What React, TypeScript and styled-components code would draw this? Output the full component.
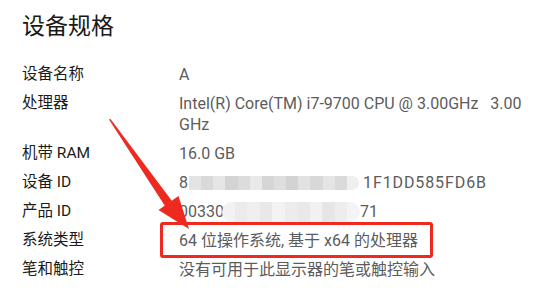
import styled, { createGlobalStyle } from 'styled-components';

const GlobalStyle = createGlobalStyle`
    html, body {
        margin: 0;
        padding: 0;
        background: #ffffff;
    }
    body {
        font-family: Roboto, 'Noto Sans CJK SC', sans-serif;
    }
`;

const specs: Spec[] = [
    { label: '设备名称', value: ['A'] },
    {
        label: '处理器',
        value: ['Intel(R) Core(TM) i7-9700 CPU @ 3.00GHz   3.00', 'GHz'],
    },
    { label: '机带 RAM', value: ['16.0 GB'] },
    {
        label: '设备 ID',
        value: ['8'],
        mosaic: { tones: ['#e4e4e4', '#d9d9d9', '#e6e6e6', '#d4d4d4', '#dcdcdc', '#e9e9e9', '#d6d6d6', '#dedede', '#d3d3d3', '#e2e2e2', '#d8d8d8', '#e5e5e5', '#dadada', '#efefef'], tall: false },
        tail: '1F1DD585FD6B',
    },
    {
        label: '产品 ID',
        value: ['00330'],
        mosaic: { tones: ['#f2f2f2', '#ebebeb', '#efefef', '#e8e8e8', '#f3f3f3', '#ececec', '#e9e9e9', '#f1f1f1', '#e6e6e6', '#ededed', '#f4f4f4'], tall: true },
        tail: '71',
    },
    { label: '系统类型', value: ['64 位操作系统, 基于 x64 的处理器'] },
    { label: '笔和触控', value: ['没有可用于此显示器的笔或触控输入'] },
];

export default function App() {
    return (
        <>
            <GlobalStyle />
            <Page>
                <Title>设备规格</Title>
                <SpecList>
                    {specs.map((spec) => (
                        <SpecRow key={spec.label}>
                            <Label>{spec.label}</Label>
                            <Value>
                                {spec.value.map((line, i) => (
                                    <Line key={i}>
                                        {line}
                                        {spec.mosaic && (
                                            <Mosaic $tall={spec.mosaic.tall}>
                                                {spec.mosaic.tones.map((tone, j) => (
                                                    <Tile key={j} style={{ background: tone }} />
                                                ))}
                                            </Mosaic>
                                        )}
                                        {spec.tail && (
                                            <Tail $wide={!spec.mosaic?.tall}>{spec.tail}</Tail>
                                        )}
                                    </Line>
                                ))}
                            </Value>
                        </SpecRow>
                    ))}
                </SpecList>
                <Highlight />
                <Arrow width="543" height="295" viewBox="0 0 543 295">
                    <polygon
                        points="109,119.5 110.5,119 172,201 165,206"
                        fill="#ee2a20"
                    />
                    <polygon
                        points="189,229 178.5,196 158.5,210"
                        fill="#ee2a20"
                    />
                </Arrow>
            </Page>
        </>
    );
}

const Page = styled.div`
    position: relative;
    width: 543px;
    height: 295px;
    overflow: hidden;
    padding: 8px 0 0 22px;
    box-sizing: border-box;
`;

const Title = styled.h1`
    margin: 0;
    font-family: 'Noto Sans CJK SC', sans-serif;
    font-size: 23px;
    font-weight: 400;
    line-height: 32px;
    color: #1a1a1a;
`;

const SpecList = styled.div`
    display: flex;
    flex-direction: column;
    gap: 8px;
    margin-top: 24px;
`;

const SpecRow = styled.div`
    display: grid;
    grid-template-columns: 157px 1fr;
    line-height: 21px;
`;

const Label = styled.div`
    color: #1b1b1b;
    font-family: Roboto, 'Noto Sans CJK SC', sans-serif;
    font-size: 15.5px;
`;

const Value = styled.div`
    color: #5c5c5c;
    font-family: Roboto, 'Noto Sans CJK SC', sans-serif;
    font-size: 16px;
`;

const Line = styled.div`
    display: flex;
    align-items: center;
    height: 21px;
    white-space: pre;
`;

const Mosaic = styled.span<{ $tall: boolean }>`
    display: inline-flex;
    height: ${({ $tall }) => ($tall ? '20px' : '14px')};
    border-radius: ${({ $tall }) => ($tall ? '10px' : '0 7px 7px 0')};
    overflow: hidden;
    margin: ${({ $tall }) => ($tall ? '0 0 0 -2px' : '0 4px 0 1px')};
    width: ${({ $tall }) => ($tall ? '138px' : '170px')};
`;

const Tile = styled.span`
    flex: 1;
`;

const Tail = styled.span<{ $wide: boolean }>`
    letter-spacing: ${({ $wide }) => ($wide ? '0.9px' : '0')};
`;

const Highlight = styled.div`
    position: absolute;
    left: 160px;
    top: 222px;
    width: 273px;
    height: 36px;
    box-sizing: border-box;
    border: 3px solid #ee2a20;
    border-radius: 3px;
    pointer-events: none;
`;

const Arrow = styled.svg`
    position: absolute;
    left: 0;
    top: 0;
    pointer-events: none;
`;

interface Spec {
    label: string;
    value: string[];
    mosaic?: { tones: string[]; tall: boolean };
    tail?: string;
}
